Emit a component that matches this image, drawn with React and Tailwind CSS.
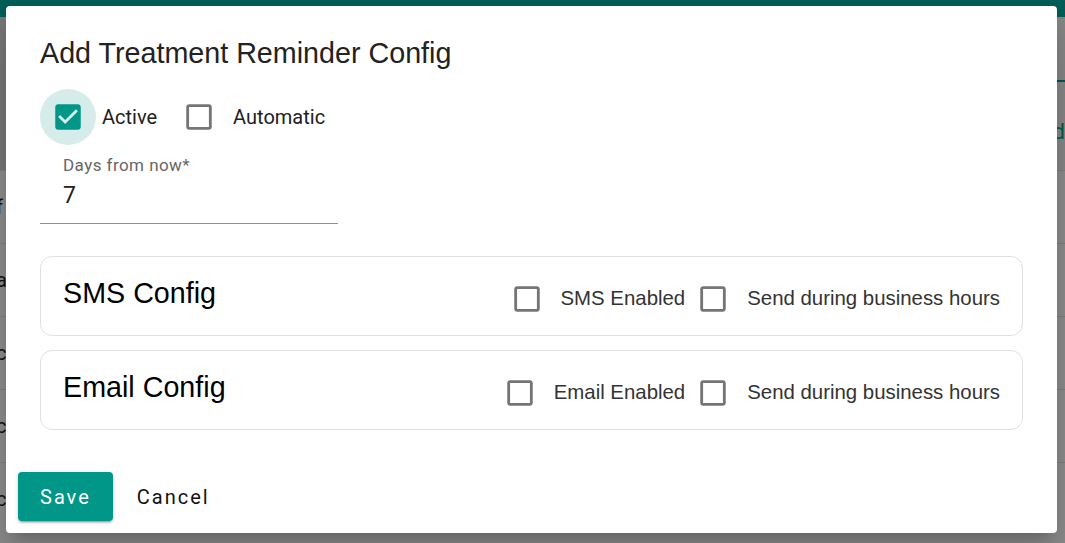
import React from "react";

const CHECKED =
  "M19 3H5c-1.11 0-2 .9-2 2v14c0 1.1.89 2 2 2h14c1.11 0 2-.9 2-2V5c0-1.1-.89-2-2-2zm-9 14l-5-5 1.41-1.41L10 14.17l7.59-7.59L19 8l-9 9z";
const UNCHECKED =
  "M19 5v14H5V5h14m0-2H5c-1.1 0-2 .9-2 2v14c0 1.1.9 2 2 2h14c1.1 0 2-.9 2-2V5c0-1.1-.9-2-2-2z";

function Box({ checked }) {
  return (
    <span
      className={
        "flex h-[56px] w-[56px] shrink-0 items-center justify-center rounded-full " +
        (checked ? "bg-[#d5ecea]" : "")
      }
    >
      <svg viewBox="0 0 24 24" className="h-[34px] w-[34px]">
        <path d={checked ? CHECKED : UNCHECKED} fill={checked ? "#009688" : "#757575"} />
      </svg>
    </span>
  );
}

function Check({ label, checked, className = "", textClass }) {
  return (
    <label className={"flex items-center " + className}>
      <Box checked={checked} />
      <span className={"ml-[6px] " + textClass}>{label}</span>
    </label>
  );
}

function ChannelCard({ title, enabledLabel, className = "" }) {
  const text = "font-['Liberation_Sans',Arial,sans-serif] text-[20.4px] text-[#333]";
  return (
    <div
      className={
        "flex h-[80px] items-center justify-between rounded-[12px] border border-[#e0e0e0] pl-[22px] pr-[22px] " +
        className
      }
    >
      <h3 className="-mt-[7px] font-['Liberation_Sans',Arial,sans-serif] text-[28.7px] leading-[34px] text-black">
        {title}
      </h3>
      <div className="mt-[5px] flex items-center">
        <Check label={enabledLabel} textClass={text} />
        <Check label="Send during business hours" textClass={text} />
      </div>
    </div>
  );
}

export default function App() {
  const rows = ["f", "a", "c", "c", "c"];

  return (
    <div className="relative h-[543px] w-[1065px] overflow-hidden bg-white font-['Roboto',sans-serif]">
      {/* page behind the dialog */}
      <div className="h-[17px] bg-[#00aa9b]" />
      <div className="flex h-[153px] bg-[#f4f4f4]">
        <div className="w-[6px] bg-[#d8d8d8]" />
        <div className="flex-1">
          <div className="h-[63px]" />
          <div className="h-[2px] bg-[#00a396]" />
          <div className="pt-[33px] text-right text-[22px] text-[#00a396]">d</div>
        </div>
      </div>
      {rows.map((r, i) => (
        <div key={i} className="flex h-[73px] items-center border-t border-[#e3e3e3] text-[20px] text-[#222]">
          <span className="-ml-[4px]">{r}</span>
        </div>
      ))}

      {/* backdrop */}
      <div className="absolute inset-0 bg-black/45" />

      {/* dialog */}
      <div className="absolute inset-0 pl-[6px] pt-[6px]">
        <div className="flex h-[527px] w-[1051px] flex-col rounded-[4px] bg-white shadow-[0_11px_15px_-7px_rgba(0,0,0,0.2),0_24px_38px_3px_rgba(0,0,0,0.14)]">
          <div className="px-[34px] pt-[29px]">
            <h2 className="font-['Liberation_Sans',Arial,sans-serif] text-[28.7px] leading-[36px] text-[#222]">
              Add Treatment Reminder Config
            </h2>

            <div className="mt-[18px] flex items-center text-[20px] text-[#212121]">
              <Check label="Active" checked className="mr-[14px]" textClass="" />
              <Check label="Automatic" textClass="" />
            </div>

            <div className="mt-[9px] w-[298px] border-b border-[#8f8f8f] pb-[13px] pl-[23px]">
              <div className="text-[17px] leading-[22px] tracking-[0.45px] text-[#666]">Days from now*</div>
              <div className="mt-[6px] text-[23px] leading-[28px] text-[#212121]">7</div>
            </div>

            <ChannelCard title="SMS Config" enabledLabel="SMS Enabled" className="mt-[32px]" />
            <ChannelCard title="Email Config" enabledLabel="Email Enabled" className="mt-[14px]" />
          </div>

          <div className="mt-auto flex items-center p-[12px]">
            <button className="h-[49px] rounded-[4px] bg-[#009688] px-[22px] text-[20px] font-normal tracking-[2px] text-white shadow-[0_3px_1px_-2px_rgba(0,0,0,0.2),0_2px_2px_0_rgba(0,0,0,0.14),0_1px_5px_0_rgba(0,0,0,0.12)]">
              Save
            </button>
            <button className="ml-[8px] h-[49px] px-[16px] text-[20px] font-normal tracking-[2px] text-[#111]">
              Cancel
            </button>
          </div>
        </div>
      </div>
    </div>
  );
}
